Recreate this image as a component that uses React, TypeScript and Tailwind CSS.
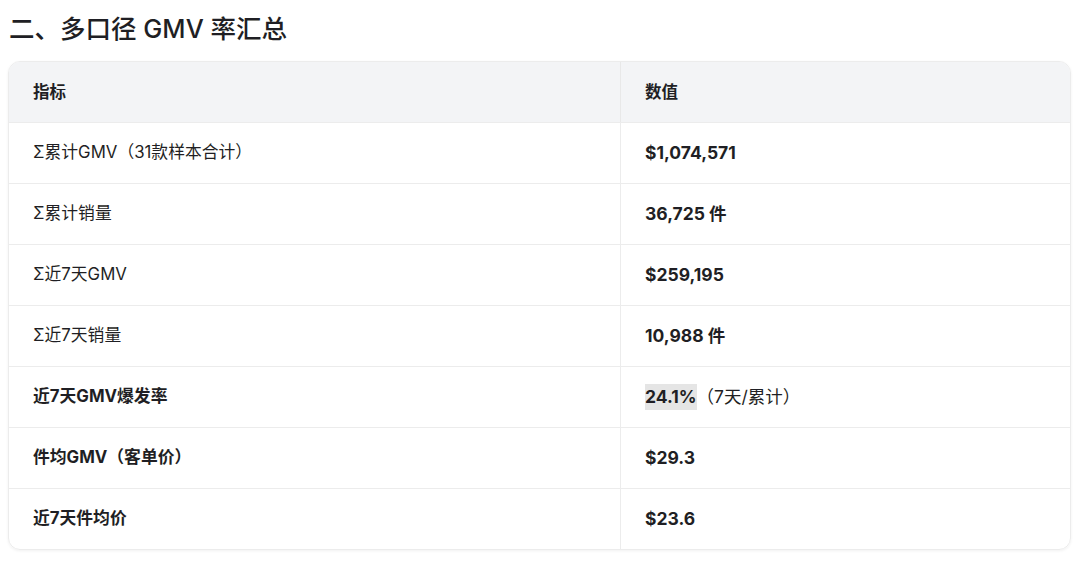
import React from 'react';

type Row = { label: string; value: React.ReactNode; strong?: boolean };

const rows: Row[] = [
  { label: 'Σ累计GMV（31款样本合计）', value: '$1,074,571' },
  { label: 'Σ累计销量', value: '36,725 件' },
  { label: 'Σ近7天GMV', value: '$259,195' },
  { label: 'Σ近7天销量', value: '10,988 件' },
  {
    label: '近7天GMV爆发率',
    strong: true,
    value: (
      <>
        <span className="bg-[#e5e5e5]">24.1%</span>
        <span className="font-normal">（7天/累计）</span>
      </>
    ),
  },
  { label: '件均GMV（客单价）', value: '$29.3', strong: true },
  { label: '近7天件均价', value: '$23.6', strong: true },
];

const App = () => {
  return (
    <div
      className="w-[1080px] h-[563px] bg-white text-[#1f1f24] overflow-hidden"
      style={{ fontFamily: '"Inter", "Noto Sans CJK SC", sans-serif' }}
    >
      <h2 className="pl-[9px] pt-[12px] h-[61px] text-[25.5px] leading-[34px] font-medium">二、多口径 GMV 率汇总</h2>
      <div className="mx-[8px] w-[1063px] rounded-xl border border-[#ececec] shadow-[0_1px_3px_rgba(0,0,0,0.06)] overflow-hidden">
        <div className="grid grid-cols-[612px_1fr] h-[60px] bg-[#f3f4f6] text-[16.5px] font-bold">
          <div className="pl-[24px] flex items-center border-r border-[#e8e8e8]">指标</div>
          <div className="pl-[24px] flex items-center">数值</div>
        </div>
        {rows.map((r) => (
          <div key={r.label} className="grid grid-cols-[612px_1fr] h-[61px] border-t border-[#ececec]">
            <div className={`pl-[24px] flex items-center border-r border-[#ececec] text-[16.8px] ${r.strong ? 'font-bold' : ''}`}>{r.label}</div>
            <div className="pl-[24px] flex items-center font-bold text-[17.5px]">{r.value}</div>
          </div>
        ))}
      </div>
    </div>
  );
};

export default App;
